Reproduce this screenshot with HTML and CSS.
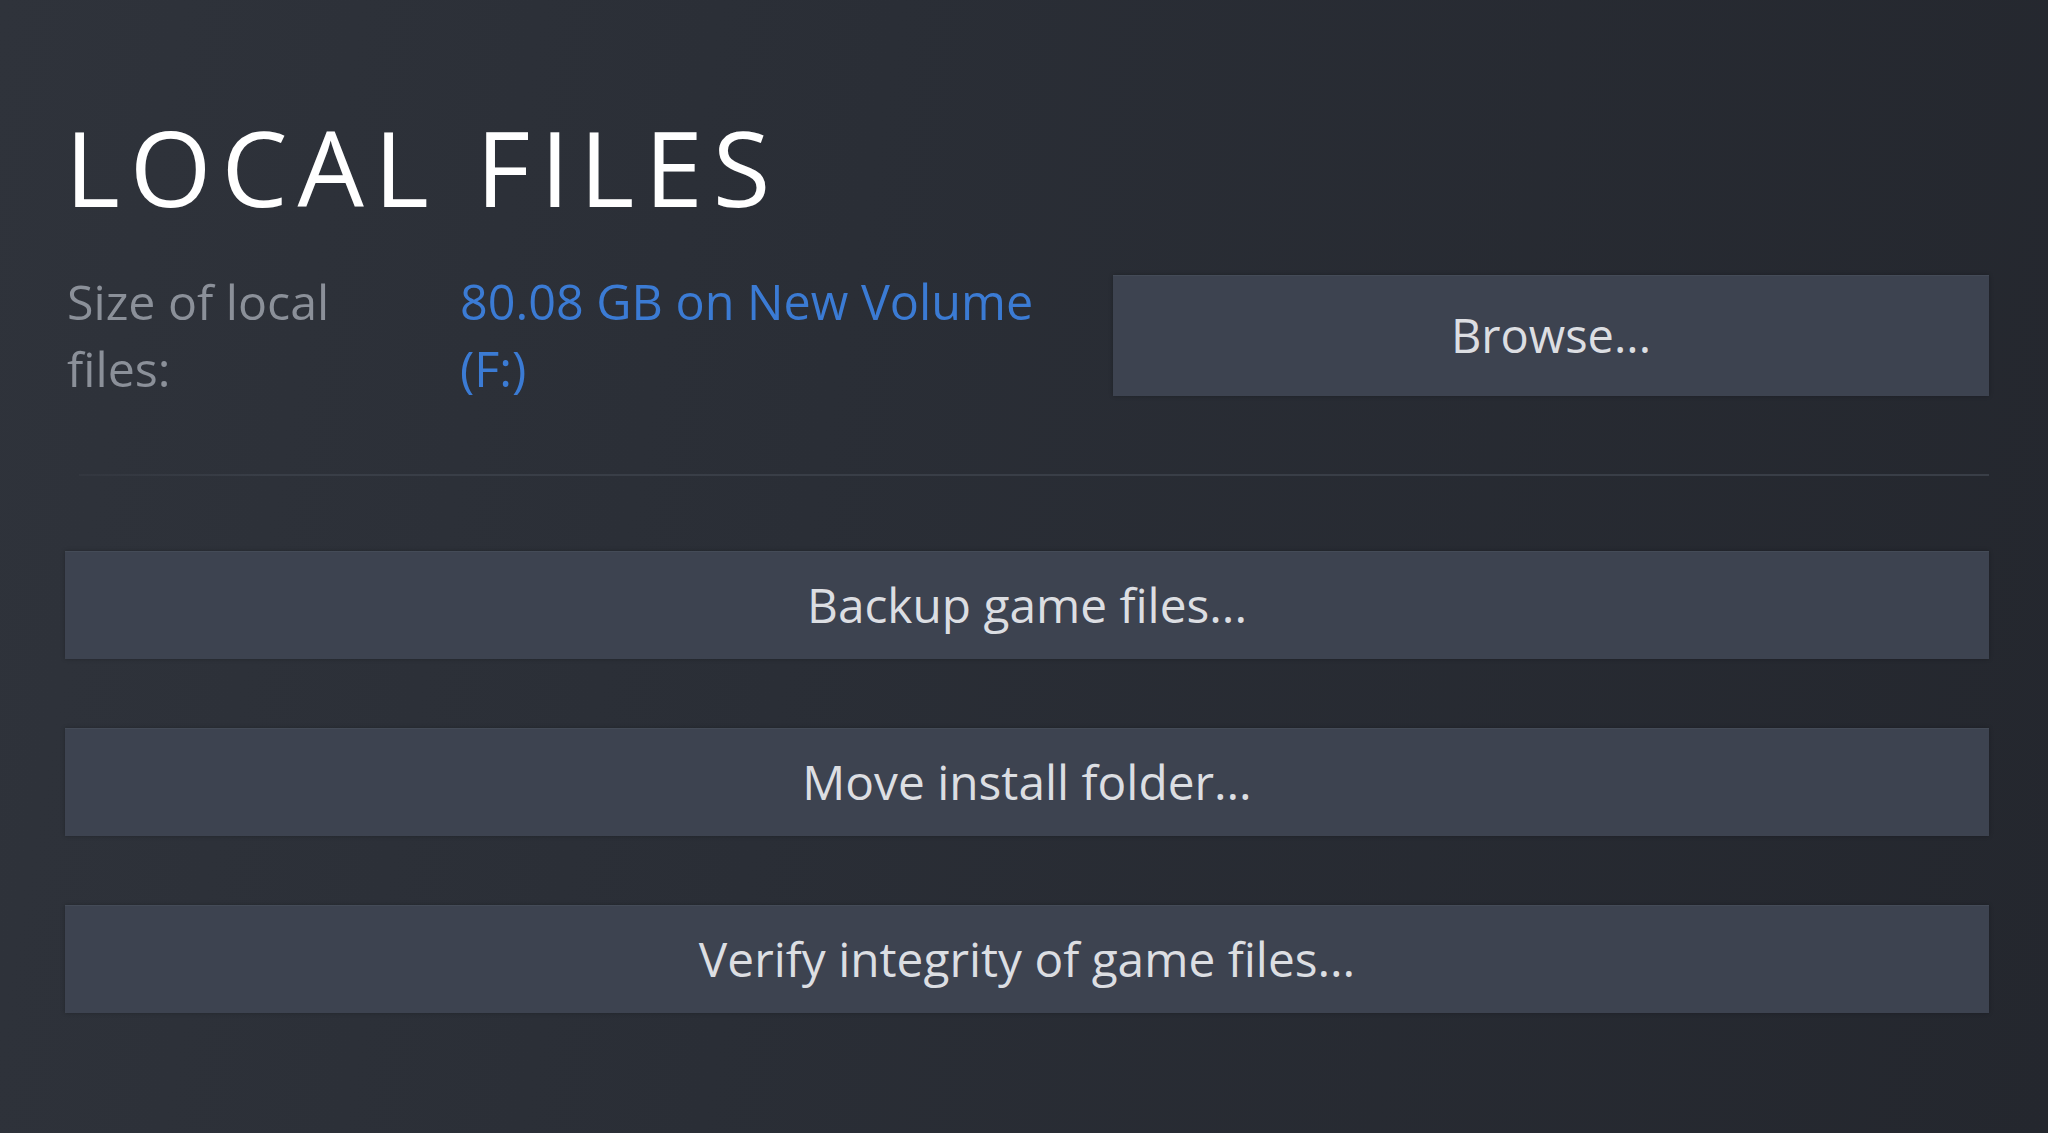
FILE: index.html
```html
<!DOCTYPE html>
<html lang="en">
<head>
<meta charset="utf-8">
<title>Local Files</title>
<link rel="stylesheet" href="styles.css">
</head>
<body>
<main class="panel">
  <h1 class="title">LOCAL FILES</h1>
  <section class="info-row">
    <div class="label">Size of local files:</div>
    <div class="value"><a class="link" href="#">80.08 GB on New Volume (F:)</a></div>
    <button class="btn btn-browse" type="button">Browse...</button>
  </section>
  <hr class="divider">
  <section class="actions">
    <button class="btn" type="button">Backup game files...</button>
    <button class="btn" type="button">Move install folder...</button>
    <button class="btn" type="button">Verify integrity of game files...</button>
  </section>
</main>
</body>
</html>
```
FILE: styles.css
```css
html, body {
  margin: 0;
  padding: 0;
  height: 100%;
}

body {
  background: linear-gradient(100deg, #2f333b 0%, #2a2e36 40%, #24272e 100%);
  font-family: "Open Sans", "Noto Sans", sans-serif;
  color: #dcdedf;
  overflow: hidden;
}

.panel {
  padding: 114px 59px 0 65px;
  display: flex;
  flex-direction: column;
}

.title {
  margin: 0;
  font-size: 105px;
  line-height: 105px;
  font-weight: 400;
  letter-spacing: 10px;
  color: #ffffff;
}

.info-row {
  margin-top: 49px;
  display: grid;
  grid-template-columns: 395px 653px 1fr;
  align-items: center;
}

.label {
  max-width: 310px;
  padding-left: 2px;
  font-size: 48.3px;
  line-height: 67px;
  color: #8b9099;
}

.value {
  max-width: 615px;
  font-size: 48.5px;
  line-height: 67px;
}

.link {
  color: #3b7bd4;
  text-decoration: none;
}

.btn {
  display: flex;
  align-items: center;
  justify-content: center;
  height: 108px;
  border: none;
  border-top: 1px solid #444b57;
  background: #3d4350;
  color: #dcdee2;
  font-family: "Open Sans", "Noto Sans", sans-serif;
  font-size: 47.8px;
  padding: 0 0 2px;
  box-shadow: 0 0 4px rgba(0, 0, 0, 0.25);
}

.btn-browse {
  height: 121px;
  font-size: 47px;
}

.divider {
  margin: 72px 0 0 14px;
  border: none;
  height: 2px;
  background: linear-gradient(to right, rgba(58, 62, 71, 0.4), #393e47 10%, #393e47 100%);
}

.actions {
  margin-top: 75px;
  display: flex;
  flex-direction: column;
  gap: 69px;
}
```
